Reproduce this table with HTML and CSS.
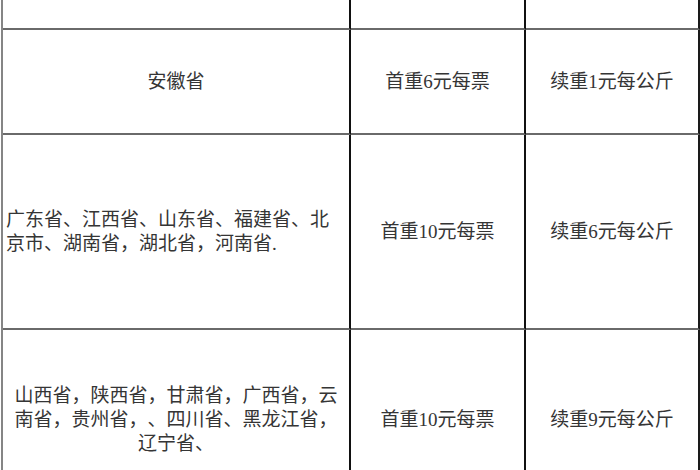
FILE: index.html
```html
<!DOCTYPE html>
<html lang="zh-CN">
<head>
<meta charset="utf-8">
<title>运费表</title>
<link rel="stylesheet" href="styles.css">
</head>
<body>
<div class="sheet">
  <div class="cell"></div>
  <div class="cell"></div>
  <div class="cell last"></div>

  <div class="cell">安徽省</div>
  <div class="cell">首重6元每票</div>
  <div class="cell last">续重1元每公斤</div>

  <div class="cell left">广东省、江西省、山东省、福建省、北京市、湖南省，湖北省，河南省.</div>
  <div class="cell">首重10元每票</div>
  <div class="cell last">续重6元每公斤</div>

  <div class="cell tail">山西省，陕西省，甘肃省，广西省，云南省，贵州省，、四川省、黑龙江省，辽宁省、</div>
  <div class="cell tail">首重10元每票</div>
  <div class="cell tail last">续重9元每公斤</div>
</div>
</body>
</html>
```

FILE: styles.css
```css
html, body {
  margin: 0;
  padding: 0;
  background: #ffffff;
  overflow: hidden;
}

body {
  width: 700px;
  height: 470px;
}

.sheet {
  margin-left: 1px;
  width: 699px;
  height: 470px;
  box-sizing: border-box;
  border-left: 2px solid #858585;
  display: grid;
  grid-template-columns: 348px 175px 174px;
  grid-template-rows: 30px 105px 195px 140px;
  font-family: "Liberation Serif", "Noto Sans CJK SC", serif;
  font-size: 19px;
  line-height: 24px;
  color: #353535;
  text-spacing-trim: space-all;
}

.cell {
  box-sizing: border-box;
  border-right: 2px solid #111111;
  border-bottom: 2px solid #6a6a6a;
  display: flex;
  align-items: center;
  justify-content: center;
  text-align: center;
  padding: 0 6px;
}

.cell.last {
  border-right-color: #1a1a1a;
}

.cell.left {
  justify-content: flex-start;
  text-align: left;
  padding: 0 6px 0 3px;
}

.cell.tail {
  border-bottom: none;
  padding-top: 40px;
}
```
